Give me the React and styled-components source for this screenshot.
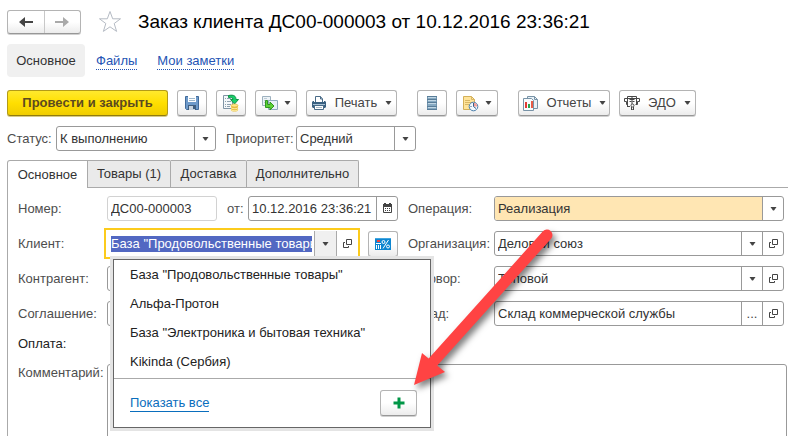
import React from "react";
import styled, { createGlobalStyle, css } from "styled-components";

const GlobalStyle = createGlobalStyle`
  *, *::before, *::after { box-sizing: border-box; }
  body {
    margin: 0;
    background: #fff;
    color: #333;
    font: 13px/16px "Liberation Sans", Arial, sans-serif;
    overflow-x: hidden;
  }
  button, input, select, textarea { font: inherit; color: inherit; margin: 0; }
  svg { display: block; flex: none; }
`;

const Page = styled.main`
  padding: 9px 0 0 7px;
`;

const TitleBar = styled.header`
  display: flex;
  align-items: center;
  height: 25px;
`;

const raised = css`
  background: linear-gradient(#fff 50%, #ececec);
  border: 1px solid #b4b4b4;
  border-bottom-color: #979797;
  border-radius: 3px;
  box-shadow: 0 1px 0 #d0d0d0;
`;

const History = styled.div`
  ${raised}
  display: flex;
  width: 74px;
  height: 24px;
`;

const HistoryButton = styled.button`
  flex: 1;
  display: flex;
  align-items: center;
  justify-content: center;
  padding: 0;
  border: 0;
  background: none;
  & + & { border-left: 1px solid #c8c8c8; }
`;

const StarButton = styled.button`
  padding: 0;
  margin: 0 16px 0 17px;
  border: 0;
  background: none;
`;

const Title = styled.h1`
  margin: 0;
  font-size: 19px;
  line-height: 24px;
  font-weight: 400;
  color: #000;
  white-space: nowrap;
`;

const Sections = styled.nav`
  display: flex;
  align-items: center;
  gap: 20px;
  height: 33px;
  margin-top: 10px;
`;

const CurrentSection = styled.span`
  display: flex;
  align-items: center;
  justify-content: center;
  width: 78px;
  height: 33px;
  margin-right: -9px;
  border-radius: 4px;
  background: #f0f0f0;
`;

const SectionLink = styled.a`
  margin-top: 2px;
  color: #2454b4;
  text-decoration: none;
  border-bottom: 1px dotted #2454b4;
`;

const Toolbar = styled.div`
  display: flex;
  gap: 9px;
  margin-top: 13px;
`;

const ToolButton = styled.button`
  ${raised}
  display: flex;
  align-items: center;
  justify-content: center;
  gap: ${(p) => (p.$text ? 8 : 6)}px;
  height: 26px;
  width: ${(p) => p.$w}px;
  padding: 0;
  margin-left: ${(p) => (p.$group ? 11 : 0)}px;
  color: #444;
  white-space: nowrap;
`;

const PrimaryButton = styled(ToolButton)`
  font-weight: 700;
  color: #5c4a20;
  background: linear-gradient(#ffe92e, #ffdf00 50%, #f0cd00);
  border-color: #b39b17;
  border-bottom-color: #8f7b10;
  box-shadow: 0 1px 0 #d8cb85;
`;

const StatusRow = styled.div`
  display: flex;
  align-items: center;
  height: 25px;
  margin-top: 10px;
`;

const Label = styled.label`
  color: #4d4d4d;
  white-space: nowrap;
`;

const StatusLabel = styled(Label)`
  width: ${(p) => p.$w}px;
  margin-left: ${(p) => p.$gap || 0}px;
`;

const Box = styled.div`
  display: flex;
  align-items: stretch;
  width: ${(p) => (p.$w ? `${p.$w}px` : "auto")};
  min-width: 0;
  height: 25px;
  border: 1px solid ${(p) => (p.$muted ? "#d2d2d2" : "#999")};
  border-radius: 3px;
  background: #fff;
  overflow: hidden;
`;

const control = css`
  flex: 1;
  width: 0;
  min-width: 0;
  padding: 0 3px;
  border: 0;
  border-radius: 0;
  outline: 0;
  appearance: none;
  background: ${(p) => (p.$filled ? "#ffe6b3" : "none")};
`;

const Input = styled.input`${control}`;
const Select = styled.select`${control}`;

const cell = css`
  flex: none;
  display: flex;
  align-items: center;
  justify-content: center;
  width: 21px;
  padding: 0;
  border: 0;
  border-left: 1px solid #999;
  background: none;
  color: #444;
`;

const CellButton = styled.button`${cell}`;
const CellMark = styled.span`${cell} pointer-events: none;`;

const Tabs = styled.div`
  display: flex;
  margin-top: 9px;
  height: 28px;
  border-bottom: 1px solid #aaa;
`;

const Tab = styled.button`
  width: ${(p) => p.$w}px;
  height: ${(p) => (p.$active ? 28 : 27)}px;
  padding: 0;
  border: 1px solid #aaa;
  border-bottom: 0;
  border-left-width: ${(p) => (p.$active ? 1 : 0)}px;
  border-radius: ${(p) => (p.$active ? "3px 0 0 0" : "0 2px 0 0")};
  background: ${(p) => (p.$active ? "#fff" : "#eaeaea")};
`;

const Panel = styled.section`
  padding: 8px 0 8px 10px;
  border-left: 1px solid #aaa;
`;

const Form = styled.form`
  display: grid;
  grid-template-columns: 89px 301px 86px minmax(0, 1fr);
  grid-auto-rows: 25px;
  align-items: center;
  row-gap: 10px;
  padding-right: 4px;
`;

const Inline = styled.div`
  display: flex;
  align-items: center;
`;

const FromLabel = styled(Label)`
  width: 21px;
  margin-left: 10px;
`;

const ClientField = styled.div`
  position: relative;
  z-index: 1;
  display: flex;
  align-items: center;
  gap: 8px;
  margin-left: -3px;
`;

const ClientBox = styled.div`
  display: flex;
  align-items: center;
  width: 256px;
  height: 31px;
  padding-left: 5px;
  border: 2px solid #fccb1c;
  background: #fff;
`;

const SelectedInput = styled.input`
  flex: none;
  width: 201px;
  height: 16px;
  margin-right: 2px;
  padding: 0;
  border: 0;
  outline: 0;
  background: #5268c2;
  color: #fff;
`;

const ClientCell = styled(CellButton)`
  align-self: stretch;
  margin: 1px 0;
  width: 22px;
  border-left-color: #aaa;
  background: ${(p) => (p.$open ? "#f0f0f0" : "none")};
`;

const Popup = styled.div`
  position: absolute;
  top: 31px;
  left: 9px;
  width: 318px;
  border: 1px solid #666;
  box-shadow: 0 0 0 3px #e4e4e4;
  background: #fff;
`;

const Options = styled.ul`
  margin: 0;
  padding: 0 0 2px;
  list-style: none;
  border-bottom: 1px solid #aaa;
`;

const Option = styled.li`
  height: 29px;
  padding: 0 16px;
  line-height: 29px;
  color: #222;
`;

const PopupFooter = styled.div`
  display: flex;
  align-items: center;
  justify-content: space-between;
  height: 48px;
  padding: 0 13px 0 16px;
`;

const ShowAll = styled.a`
  color: #0a6ebd;
  text-decoration: none;
  border-bottom: 1px solid #0a6ebd;
`;

const FooterRow = styled.div`
  display: grid;
  grid-template-columns: 89px minmax(0, 1fr);
  margin-top: ${(p) => p.$top}px;
  padding-right: 1px;
`;

const PaymentLabel = styled.span`
  color: #222;
`;

const Comment = styled.textarea`
  display: block;
  width: 100%;
  height: 76px;
  border: 1px solid #999;
  border-radius: 3px;
  outline: 0;
  resize: none;
`;

const CommentLabel = styled(Label)`
  margin-top: 1px;
`;

const Pointer = styled.svg`
  position: absolute;
  z-index: 2;
  top: -4px;
  left: 304px;
  pointer-events: none;
  filter: drop-shadow(3px 4px 3px rgba(0, 0, 0, 0.5));
`;

const Chevron = () => (
  <svg width="7" height="4" viewBox="0 0 7 4" aria-hidden="true">
    <path d="M0.5 0h6L4 3.5H3z" fill="#444" />
  </svg>
);

const OpenIcon = () => (
  <svg width="11" height="11" viewBox="0 0 11 11" fill="none" stroke="#444" aria-hidden="true">
    <path d="M4.500 1.500h5v5h-5zM3 4.500H1.500v5h5V8" />
  </svg>
);

const Arrow = ({ flip }) => (
  <svg width="16" height="12" viewBox="0 0 16 12" aria-hidden="true">
    <path
      d={flip ? "M1 5h8V1l6 5-6 5V7H1z" : "M15 5H7V1L1 6l6 5V7h8z"}
      fill={flip ? "#aaa" : "#444"}
    />
  </svg>
);

const Star = () => (
  <svg width="24" height="23" viewBox="0 0 24 23" fill="none" stroke="#b5bbc4" aria-hidden="true">
    <path d="M12 1.5l2.7 7.3h7.8l-6.3 4.7 2.4 7.9L12 16.8l-6.600 4.600 2.400-7.900-6.300-4.700h7.800z" />
  </svg>
);

const CalendarIcon = () => (
  <svg width="11" height="11" viewBox="0 0 11 11" aria-hidden="true">
    <path d="M1.500 1.500h8v8h-8z" fill="#fff" stroke="#444" />
    <path d="M1 1h9v3H1zM2 0h2v2H2zM7 0h2v2H7z" fill="#444" />
    <path d="M3 5.500h6M3 7.500h6" stroke="#444" strokeDasharray="1 1" />
  </svg>
);

const SaveIcon = () => (
  <svg width="16" height="16" viewBox="0 0 16 16" aria-hidden="true">
    <path d="M1.500 1.500h13v13h-12l-1-1z" fill="#6e9aca" stroke="#416b9b" />
    <path d="M4 1h8v6H4z" fill="#fff" />
    <path d="M5 3.500h6M5 5.500h6" stroke="#9db7cc" />
    <path d="M4 10h8v5H4z" fill="#3f5e7f" />
    <path d="M5 11h6v4H5z" fill="#c9d4df" />
    <path d="M9 11h2v3H9z" fill="#3f5e7f" />
  </svg>
);

const PostIcon = () => (
  <svg width="18" height="18" viewBox="0 0 18 18" aria-hidden="true">
    <path d="M1.500 1.500h9v13h-9z" fill="#f5f8fa" stroke="#8195a5" />
    <path d="M3 4.500h1M5 4.500h4M3 7.500h1M5 7.500h4M3 10.500h1M5 10.500h4M3 12.500h1M5 12.500h3" stroke="#8fa1af" />
    <path d="M6.500 1.500C12 .5 14 2 14 5.500h2.500L12.500 10 8.500 5.500H11C11 4 9.500 3 6.500 3.500z" fill="#18cf6a" stroke="#119448" />
    <path d="M9 11v5c0 2 7 2 7 0v-5z" fill="#e8bf45" />
    <path d="M9 13.500c0 1.500 7 1.500 7 0M9 15.500c0 1.500 7 1.500 7 0" stroke="#fff0a8" fill="none" />
    <ellipse cx="12.500" cy="11.500" rx="3.500" ry="1.500" fill="#ffe985" stroke="#d9ab35" strokeWidth=".6" />
  </svg>
);

const BasedOnIcon = () => (
  <svg width="16" height="16" viewBox="0 0 16 16" aria-hidden="true">
    <path d="M.5 1.500h8v9h-8z" fill="#edf3f7" stroke="#9db1bf" />
    <path d="M2 3.500h3M2 5.500h5M2 7.500h3" stroke="#bdccd6" />
    <path d="M6.500 5.500h9v9h-9z" fill="#e7f0f7" stroke="#8faabd" />
    <path d="M3.500 5.500h2v4h2.500V7l4 4-4 4v-2.500H3.500z" fill="#5dd136" stroke="#2f9620" />
  </svg>
);

const PrintIcon = () => (
  <svg width="16" height="16" viewBox="0 0 16 16" aria-hidden="true">
    <path d="M4.500 7V1.500h5L11.500 4v3" fill="#fff" stroke="#496b87" />
    <path d="M9.500 1.500V4h2" fill="none" stroke="#496b87" />
    <path d="M2 6h1v1h10V6h1l1 1v5l-1 1H2l-1-1V7z" fill="#396080" />
    <path d="M2 9.500h12" stroke="#a7c1d4" />
    <path d="M3.500 10.500h9v4h-9z" fill="#fff" stroke="#496b87" />
    <path d="M5 12.500h6" stroke="#aabac6" />
  </svg>
);

const RegisterIcon = () => (
  <svg width="12" height="16" viewBox="0 0 12 16" aria-hidden="true">
    <path d="M1 1h10v14H1z" fill="#86a9c2" />
    <path d="M1.500 1v14M10.500 1v14" stroke="#6f93ad" />
    <path d="M1 1.500h10M1 4.500h10M1 7.500h10M1 11.500h10M1 14.500h10" stroke="#587c98" />
    <path d="M2 2.500h8M2 5.500h8M2 8.500h8M2 12.500h8" stroke="#c0d6e4" />
  </svg>
);

const TaskIcon = () => (
  <svg width="17" height="17" viewBox="0 0 17 17" aria-hidden="true">
    <path d="M1.500 1.500h8l3 3v10h-11z" fill="#ffe49a" stroke="#d3b059" />
    <path d="M9.500 1.500v3h3M3 5.500h5M3 7.500h7M3 9.500h4" fill="none" stroke="#d9b765" />
    <circle cx="11.500" cy="11.500" r="4.300" fill="#f4faff" stroke="#4a7fab" />
    <path d="M11.500 11.500V7.700a3.800 3.800 0 0 1 3.700 3.800z" fill="#f3a09b" />
    <path d="M11.500 11.500V8M11.500 11.500l2.500 2M8.500 11.500h1" stroke="#345f8a" fill="none" />
  </svg>
);

const ReportIcon = () => (
  <svg width="17" height="17" viewBox="0 0 17 17" aria-hidden="true">
    <path d="M5.500 1.500h7l3 3v9h-10z" fill="#e8f1f7" stroke="#7893a7" />
    <path d="M12.500 1.500v3h3" fill="none" stroke="#7893a7" />
    <path d="M1.500 3.500h8l2 2v10h-10z" fill="#f8fbfd" stroke="#7893a7" />
    <path d="M3 7h2v6H3z" fill="#e23b35" />
    <path d="M6 9h2v4H6z" fill="#2aa54b" />
    <path d="M9 6h2v7H9z" fill="#e85b47" />
  </svg>
);

const EdoIcon = () => (
  <svg width="16" height="16" viewBox="0 0 16 16" fill="none" stroke="#484848" aria-hidden="true">
    <path d="M3.500 9.500h-1v-3h-2v-3h3m0-2h9v2h3v3h-2v3h-2M3.500 1.500v10H6M12.500 3.500v6M5.500 4.500h5M1 3.500h14M5.500 6.500h2m1 0h2" />
    <path d="M8 2v7M3 11.500h3" />
    <circle cx="8.500" cy="10.500" r="1.500" />
    <path d="M7.500 12v3l1-1 1 1v-3" />
  </svg>
);

const CardIcon = () => (
  <svg width="16" height="12" viewBox="0 0 16 12" aria-hidden="true">
    <path d="M0 0h16v12H0z" fill="#0e86d0" />
    <path d="M0 0h16v1H0z" fill="#43a6e0" />
    <path d="M1 5.500h5M1.500 7v4M3.500 7v4M5.500 7v4" stroke="#fff" />
    <path d="M2 2h3v2H2z" fill="#f0433f" />
    <circle cx="8.500" cy="4" r="1.500" fill="none" stroke="#fff" />
    <circle cx="13" cy="8.500" r="1.500" fill="none" stroke="#fff" />
    <path d="M13.500 2L8 10.500" stroke="#fff" />
  </svg>
);

const PlusIcon = () => (
  <svg width="12" height="12" viewBox="0 0 12 12" aria-hidden="true">
    <path d="M4.500 .5h3v4h4v3h-4v4h-3v-4h-4v-3h4z" fill="#009646" />
  </svg>
);

const clients = [
  'База "Продовольственные товары"',
  "Альфа-Протон",
  'База "Электроника и бытовая техника"',
  "Kikinda (Сербия)",
];

const tabs = [
  ["Основное", 81],
  ["Товары (1)", 83],
  ["Доставка", 76],
  ["Дополнительно", 112],
];

const SelectField = ({ id, value, width, filled }) => (
  <Box $w={width}>
    <Select id={id} defaultValue={value} $filled={filled}>
      <option>{value}</option>
    </Select>
    <CellMark aria-hidden="true"><Chevron /></CellMark>
  </Box>
);

const LookupField = ({ id, value, dots }) => (
  <Box>
    <Input id={id} defaultValue={value} />
    <CellButton type="button" aria-label="Выбрать">{dots ? "..." : <Chevron />}</CellButton>
    <CellButton type="button" aria-label="Открыть"><OpenIcon /></CellButton>
  </Box>
);

export default function App() {
  return (
    <Page>
      <GlobalStyle />
      <TitleBar>
        <History>
          <HistoryButton aria-label="Назад"><Arrow /></HistoryButton>
          <HistoryButton aria-label="Вперед"><Arrow flip /></HistoryButton>
        </History>
        <StarButton aria-label="Избранное"><Star /></StarButton>
        <Title>Заказ клиента ДС00-000003 от 10.12.2016 23:36:21</Title>
      </TitleBar>

      <Sections>
        <CurrentSection>Основное</CurrentSection>
        <SectionLink href="#files">Файлы</SectionLink>
        <SectionLink href="#notes">Мои заметки</SectionLink>
      </Sections>

      <Toolbar>
        <PrimaryButton $w={161}>Провести и закрыть</PrimaryButton>
        <ToolButton $w={30} aria-label="Записать"><SaveIcon /></ToolButton>
        <ToolButton $w={30} aria-label="Провести"><PostIcon /></ToolButton>
        <ToolButton $w={42} aria-label="Создать на основании"><BasedOnIcon /><Chevron /></ToolButton>
        <ToolButton $w={91} $text><PrintIcon />Печать<Chevron /></ToolButton>
        <ToolButton $w={30} $group aria-label="Движения документа"><RegisterIcon /></ToolButton>
        <ToolButton $w={42} aria-label="Напоминания"><TaskIcon /><Chevron /></ToolButton>
        <ToolButton $w={92} $group $text><ReportIcon />Отчеты<Chevron /></ToolButton>
        <ToolButton $w={77} $text><EdoIcon />ЭДО<Chevron /></ToolButton>
      </Toolbar>

      <StatusRow>
        <StatusLabel htmlFor="status" $w={49}>Статус:</StatusLabel>
        <SelectField id="status" value="К выполнению" width={160} />
        <StatusLabel htmlFor="priority" $w={70} $gap={10}>Приоритет:</StatusLabel>
        <SelectField id="priority" value="Средний" width={120} />
      </StatusRow>

      <Tabs role="tablist">
        {tabs.map(([name, w], i) => (
          <Tab key={name} role="tab" aria-selected={i === 0} $active={i === 0} $w={w}>{name}</Tab>
        ))}
      </Tabs>

      <Panel>
        <Form>
          <Label htmlFor="number">Номер:</Label>
          <Inline>
            <Box $w={110} $muted><Input id="number" readOnly value="ДС00-000003" /></Box>
            <FromLabel htmlFor="date">от:</FromLabel>
            <Box $w={150}>
              <Input id="date" defaultValue="10.12.2016 23:36:21" />
              <CellButton type="button" aria-label="Календарь"><CalendarIcon /></CellButton>
            </Box>
          </Inline>
          <Label htmlFor="operation">Операция:</Label>
          <SelectField id="operation" value="Реализация" filled />

          <Label htmlFor="client">Клиент:</Label>
          <ClientField>
            <ClientBox>
              <SelectedInput id="client" role="combobox" aria-expanded="true" aria-controls="clients" defaultValue={clients[0]} />
              <ClientCell type="button" $open aria-label="Выбрать"><Chevron /></ClientCell>
              <ClientCell type="button" aria-label="Открыть"><OpenIcon /></ClientCell>
            </ClientBox>
            <ToolButton type="button" $w={30} aria-label="Карта лояльности"><CardIcon /></ToolButton>
            <Popup>
              <Options id="clients" role="listbox">
                {clients.map((name) => <Option key={name} role="option">{name}</Option>)}
              </Options>
              <PopupFooter>
                <ShowAll href="#all">Показать все</ShowAll>
                <ToolButton type="button" $w={37} aria-label="Создать"><PlusIcon /></ToolButton>
              </PopupFooter>
            </Popup>
            <Pointer width="150" height="166" viewBox="0 0 150 166" aria-hidden="true">
              <path d="M139 11L25 138" stroke="#ff4343" strokeWidth="11" strokeLinecap="round" />
              <path d="M6 161L14 129L37 148z" fill="#ff4343" />
            </Pointer>
          </ClientField>
          <Label htmlFor="company">Организация:</Label>
          <LookupField id="company" value="Деловой союз" />

          <Label htmlFor="partner">Контрагент:</Label>
          <Box $w={290}><Input id="partner" /></Box>
          <Label htmlFor="contract">Договор:</Label>
          <LookupField id="contract" value="Типовой" />

          <Label htmlFor="agreement">Соглашение:</Label>
          <Box $w={290}><Input id="agreement" /></Box>
          <Label htmlFor="store">Склад:</Label>
          <LookupField id="store" value="Склад коммерческой службы" dots />
        </Form>

        <FooterRow $top={10}>
          <PaymentLabel>Оплата:</PaymentLabel>
        </FooterRow>
        <FooterRow $top={12}>
          <CommentLabel htmlFor="comment">Комментарий:</CommentLabel>
          <Comment id="comment" />
        </FooterRow>
      </Panel>
    </Page>
  );
}
